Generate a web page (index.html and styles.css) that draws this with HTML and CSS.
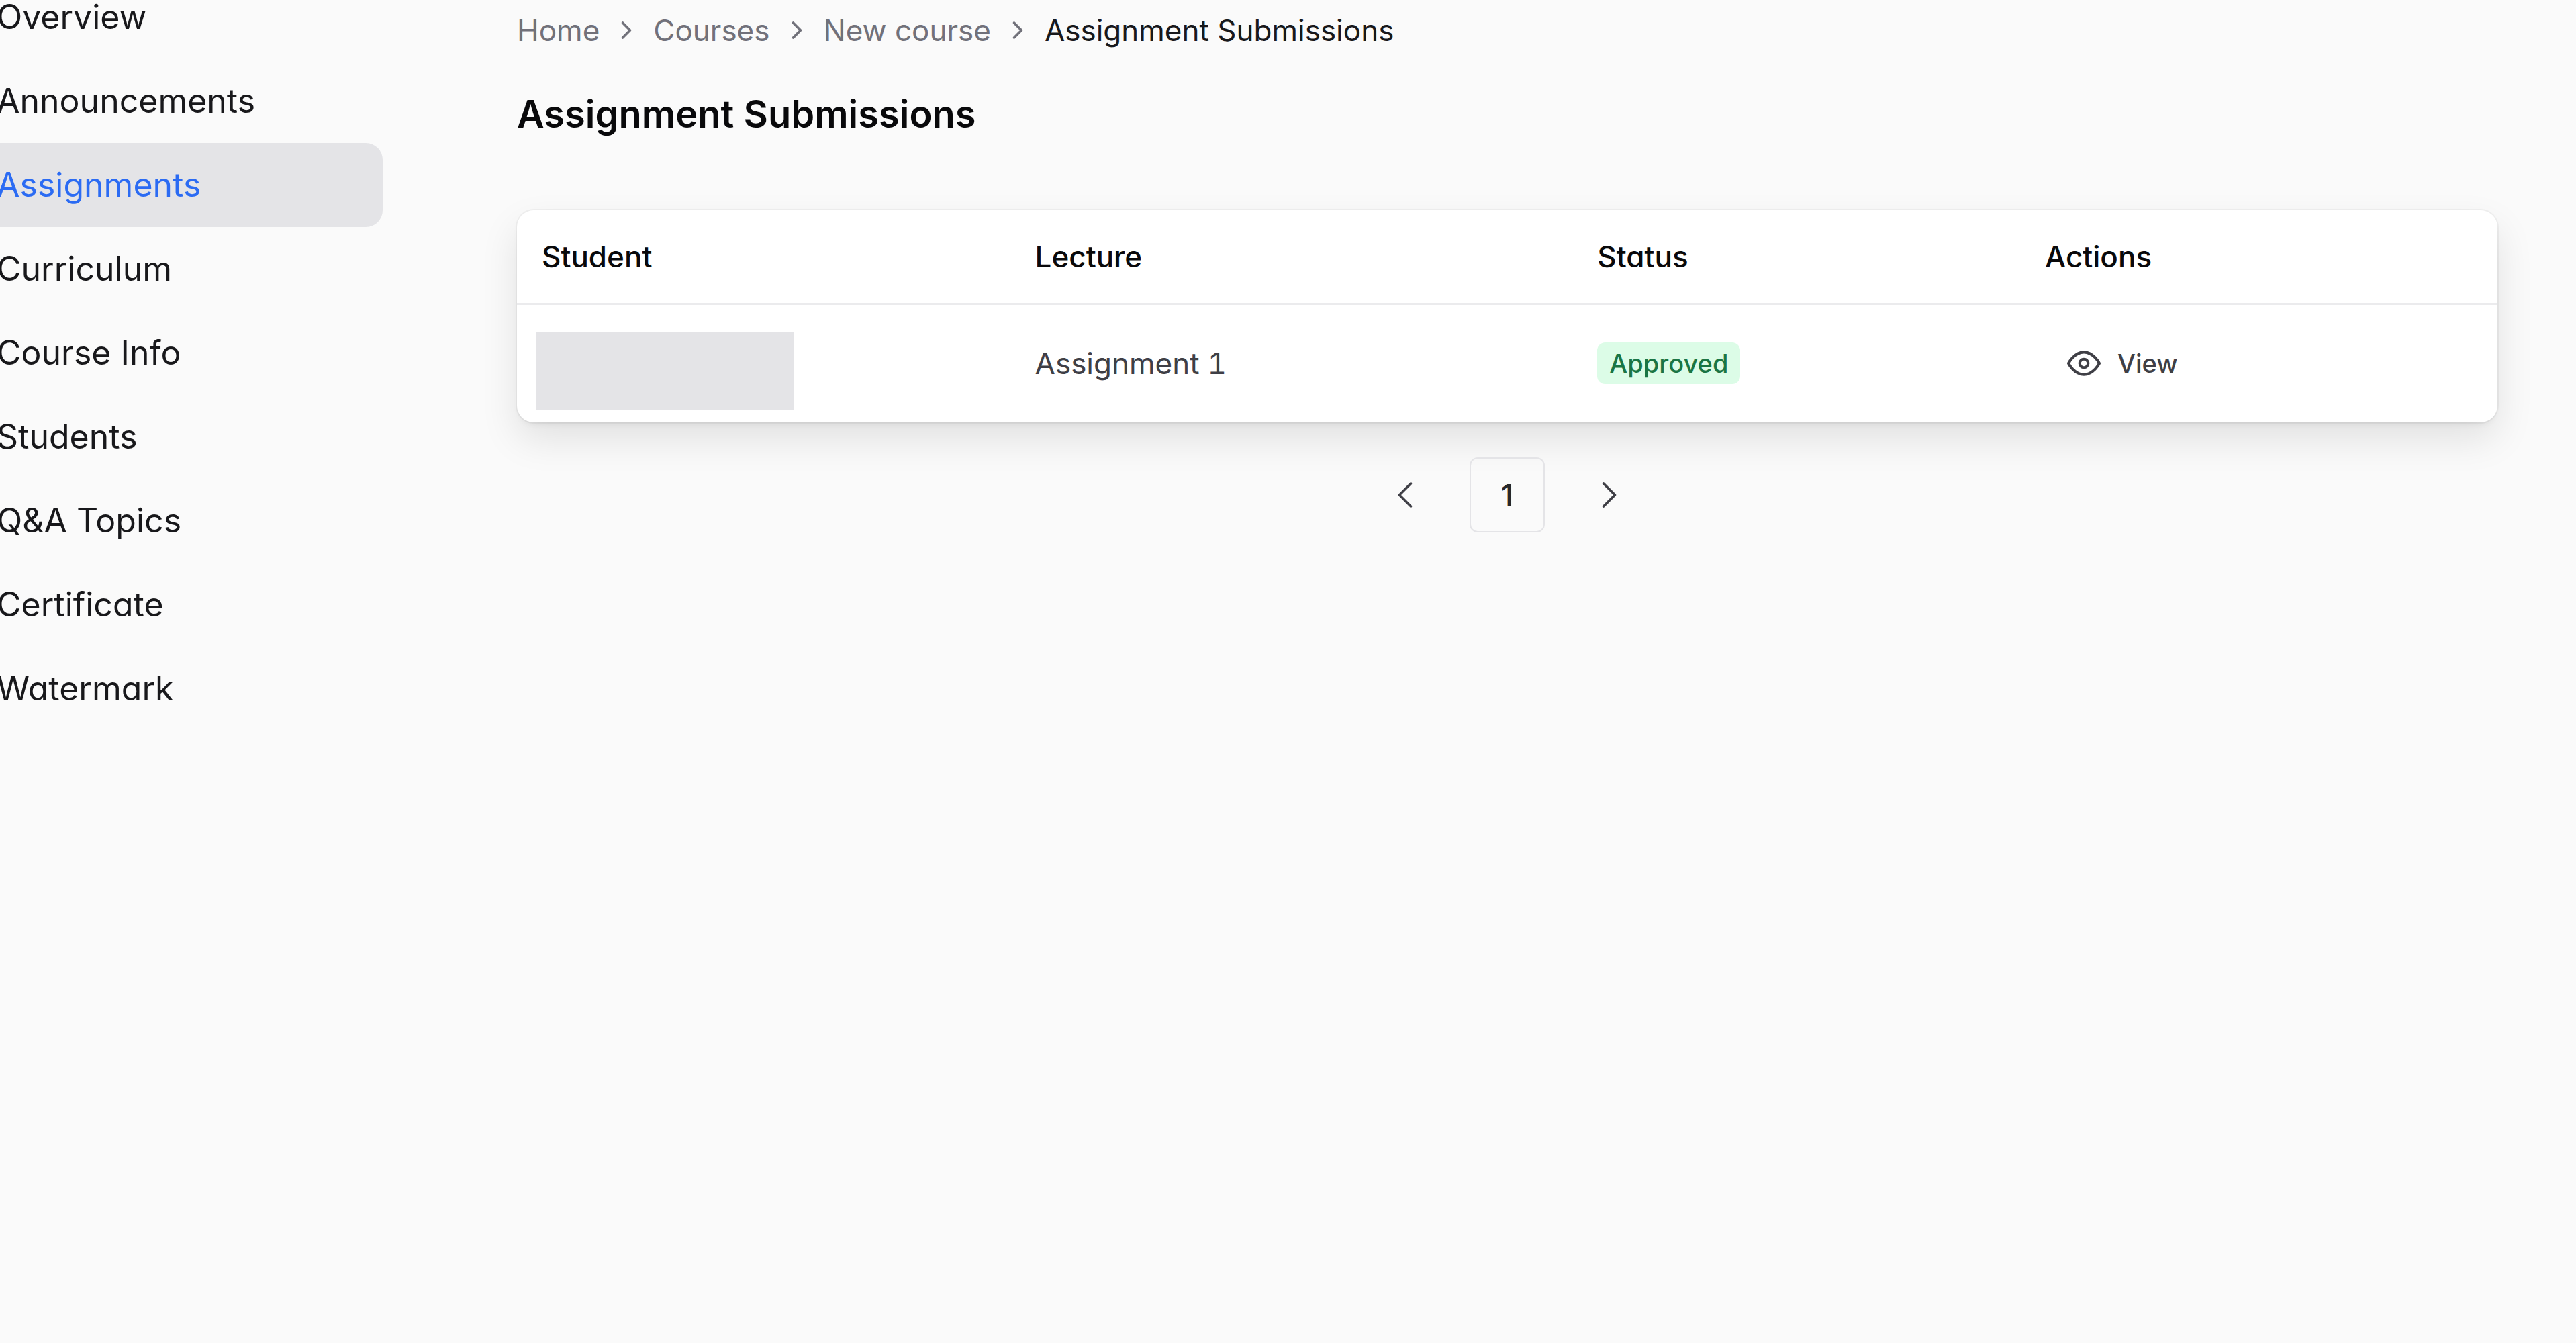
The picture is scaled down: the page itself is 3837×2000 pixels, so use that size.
FILE: index.html
```html
<!DOCTYPE html>
<html lang="en">
<head>
<meta charset="utf-8">
<title>Assignment Submissions</title>
<link rel="stylesheet" href="styles.css">
</head>
<body>
<div class="layout">
  <nav class="sidebar" aria-label="Course">
    <a class="sidebar-link" href="#">Overview</a>
    <a class="sidebar-link" href="#">Announcements</a>
    <a class="sidebar-link active" href="#" aria-current="page">Assignments</a>
    <a class="sidebar-link" href="#">Curriculum</a>
    <a class="sidebar-link" href="#">Course Info</a>
    <a class="sidebar-link" href="#">Students</a>
    <a class="sidebar-link" href="#">Q&amp;A Topics</a>
    <a class="sidebar-link" href="#">Certificate</a>
    <a class="sidebar-link" href="#">Watermark</a>
  </nav>
  <main class="content">
    <nav class="breadcrumb" aria-label="Breadcrumb">
      <a href="#">Home</a>
      <svg class="crumb-icon" viewBox="0 0 24 24" aria-hidden="true"><path d="m9 18 6-6-6-6"/></svg>
      <a href="#">Courses</a>
      <svg class="crumb-icon" viewBox="0 0 24 24" aria-hidden="true"><path d="m9 18 6-6-6-6"/></svg>
      <a href="#">New course</a>
      <svg class="crumb-icon" viewBox="0 0 24 24" aria-hidden="true"><path d="m9 18 6-6-6-6"/></svg>
      <span class="current">Assignment Submissions</span>
    </nav>
    <h1 class="title">Assignment Submissions</h1>
    <div class="card">
      <table class="table">
        <colgroup><col class="col-student"><col class="col-lecture"><col class="col-status"><col class="col-actions"></colgroup>
        <thead>
          <tr><th scope="col">Student</th><th scope="col">Lecture</th><th scope="col">Status</th><th scope="col">Actions</th></tr>
        </thead>
        <tbody>
          <tr>
            <td class="student-cell"><div class="redacted"></div></td>
            <td>Assignment 1</td>
            <td><span class="badge">Approved</span></td>
            <td><button class="view-button" type="button"><svg class="view-icon" viewBox="0 0 24 24" aria-hidden="true"><path d="M1 12s4-8 11-8 11 8 11 8-4 8-11 8-11-8-11-8z"/><circle cx="12" cy="12" r="3"/></svg>View</button></td>
          </tr>
        </tbody>
      </table>
    </div>
    <nav class="pagination" aria-label="Pagination">
      <button class="page-button" type="button" aria-label="Previous page"><svg class="page-icon" viewBox="0 0 24 24" aria-hidden="true"><path d="m15 18-6-6 6-6"/></svg></button>
      <button class="page-button selected" type="button" aria-current="page">1</button>
      <button class="page-button" type="button" aria-label="Next page"><svg class="page-icon" viewBox="0 0 24 24" aria-hidden="true"><path d="m9 18 6-6-6-6"/></svg></button>
    </nav>
  </main>
</div>
</body>
</html>
```
FILE: styles.css
```css
* { box-sizing: border-box; }

body {
  margin: 0;
  min-height: 100vh;
  background: #fafafa;
  color: #18181b;
  font-family: Inter, "Liberation Sans", sans-serif;
  font-feature-settings: "cv11";
  font-size: 44px;
  line-height: 62px;
  overflow-x: hidden;
}

svg {
  fill: none;
  stroke: currentColor;
  stroke-linecap: round;
  stroke-linejoin: round;
}

a { color: inherit; text-decoration: none; }

button {
  border: 0;
  background: transparent;
  color: inherit;
  font: inherit;
  font-feature-settings: inherit;
}

.layout {
  display: flex;
  gap: 200px;
  padding-right: 117px;
}

.sidebar {
  display: flex;
  flex-direction: column;
  flex: none;
  width: 612px;
  margin: -37px 0 0 -42px;
}

.sidebar-link {
  padding: 25px 37px;
  border-radius: 25px;
  font-size: 50px;
  line-height: 75px;
}

.sidebar-link.active {
  background: #e4e4e7;
  color: #2b6bf3;
}

.content {
  flex: 1;
  min-width: 0;
  padding-top: 14px;
}

.breadcrumb {
  display: flex;
  align-items: center;
  gap: 18px;
  color: #71717a;
}

.current { color: #18181b; }

.crumb-icon { width: 44px; height: 44px; stroke-width: 2; }

.title {
  margin: 50px 0 99px;
  font-size: 56px;
  font-weight: 600;
  line-height: 88px;
  color: #09090b;
}

.card {
  overflow: hidden;
  border-radius: 25px;
  background: #fff;
  box-shadow: 0 0 0 2px rgba(0, 0, 0, 0.04), 0 25px 56px 0 rgba(0, 0, 0, 0.1), 0 6px 12px -6px rgba(0, 0, 0, 0.1);
}

.table {
  width: 100%;
  border-collapse: collapse;
  table-layout: fixed;
}

.col-student { width: 24.9%; }
.col-lecture { width: 28.4%; }
.col-status { width: 22.6%; }
.col-actions { width: 24.1%; }

th, td {
  padding: 0 37px;
  text-align: left;
}

th {
  height: 139px;
  border-bottom: 3px solid #ebebed;
  font-weight: 500;
  color: #09090b;
}

td {
  height: 177px;
  color: #3f3f46;
  font-feature-settings: "cv11", "tnum";
}

.student-cell { padding: 23px 28px 0; }

.redacted {
  width: 384px;
  height: 115px;
  background: #e4e4e7;
}

.badge {
  display: block;
  width: fit-content;
  padding: 6px 18px;
  border-radius: 12px;
  background: #dcfce7;
  color: #1a7544;
  font-size: 38px;
  font-weight: 500;
  line-height: 50px;
}

.view-button {
  display: flex;
  align-items: center;
  gap: 25px;
  height: 100px;
  padding: 0 33px;
  font-size: 38px;
  font-weight: 500;
}

.view-icon { width: 50px; height: 50px; stroke-width: 2; }

.pagination {
  display: flex;
  justify-content: center;
  gap: 40px;
  margin-top: 52px;
}

.page-button {
  display: flex;
  align-items: center;
  justify-content: center;
  width: 112px;
  height: 112px;
  padding: 0;
  border-radius: 12px;
  color: #3f3f46;
  font-weight: 500;
}

.page-button.selected {
  border: 2px solid #e4e4e7;
  color: #27272a;
}

.page-icon { width: 68px; height: 68px; stroke-width: 1.3; }
```
